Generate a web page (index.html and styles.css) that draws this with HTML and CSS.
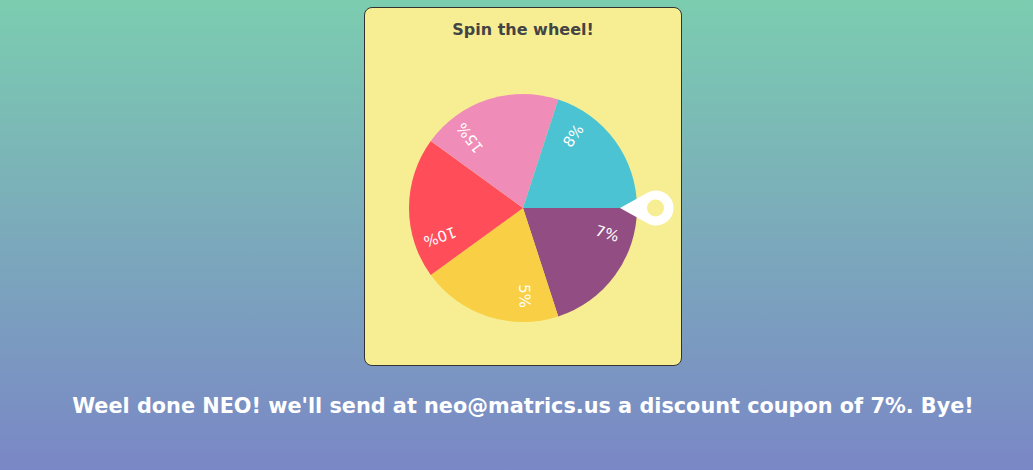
FILE: index.html
```html
<!DOCTYPE html>
<html>
<head>
<meta charset="utf-8">
<link rel="stylesheet" href="styles.css">
</head>
<body>
<main class="page">
  <section class="card">
    <h1 class="title">Spin the wheel!</h1>
    <svg class="wheel" width="316" height="323" viewBox="0 0 316 323">
      <g transform="translate(158 166)">
        <path d="M0 0 L114 0 A114 114 0 0 1 35.23 108.42 Z" fill="#924E82"/>
        <path d="M0 0 L35.23 108.42 A114 114 0 0 1 -92.23 67.01 Z" fill="#F8CF45"/>
        <path d="M0 0 L-92.23 67.01 A114 114 0 0 1 -92.23 -67.01 Z" fill="#FF4D5A"/>
        <path d="M0 0 L-92.23 -67.01 A114 114 0 0 1 35.23 -108.42 Z" fill="#EF8CB8"/>
        <path d="M0 0 L35.23 -108.42 A114 114 0 0 1 114 0 Z" fill="#4BC3D2"/>
        <g class="labels">
          <text transform="rotate(17) translate(88 0)">7%</text>
          <text transform="rotate(89) translate(88 0)">5%</text>
          <text transform="rotate(161) translate(88 0)">10%</text>
          <text transform="rotate(233) translate(88 0)">15%</text>
          <text transform="rotate(305) translate(88 0)">8%</text>
        </g>
        <path d="M97 0 L124.5 -15.3 A17.5 17.5 0 1 1 124.5 15.3 Z" fill="#ffffff"/>
        <circle cx="132.5" cy="0" r="8.5" fill="#F7EE93"/>
      </g>
    </svg>
  </section>
  <p class="message">Weel done NEO! we'll send at neo@matrics.us a discount coupon of 7%. Bye!</p>
</main>
</body>
</html>
```
FILE: styles.css
```css
html, body {
  margin: 0;
  padding: 0;
}
body {
  height: 470px;
  overflow: hidden;
  background: linear-gradient(to bottom, #7BCDB0 0%, #7BAABB 50%, #7A87C6 100%);
  font-family: "DejaVu Sans", "Comic Sans MS", sans-serif;
}
.page {
  display: flex;
  flex-direction: column;
  align-items: center;
  padding-left: 13px;
  padding-top: 7px;
}
.card {
  width: 316px;
  height: 357px;
  background: #F7EE93;
  border: 1px solid #333;
  border-radius: 8px;
  display: flex;
  flex-direction: column;
  align-items: center;
}
.title {
  margin: 0;
  padding-top: 10px;
  font-size: 16px;
  line-height: 24px;
  font-weight: bold;
  color: #444;
}
.wheel {
  display: block;
}
.labels text {
  fill: #fff;
  font-family: "DejaVu Sans", sans-serif;
  font-size: 15px;
  text-anchor: middle;
  dominant-baseline: central;
}
.message {
  margin: 25px 0 0;
  font-size: 20.8px;
  line-height: 30px;
  font-weight: bold;
  color: #fff;
}
```
